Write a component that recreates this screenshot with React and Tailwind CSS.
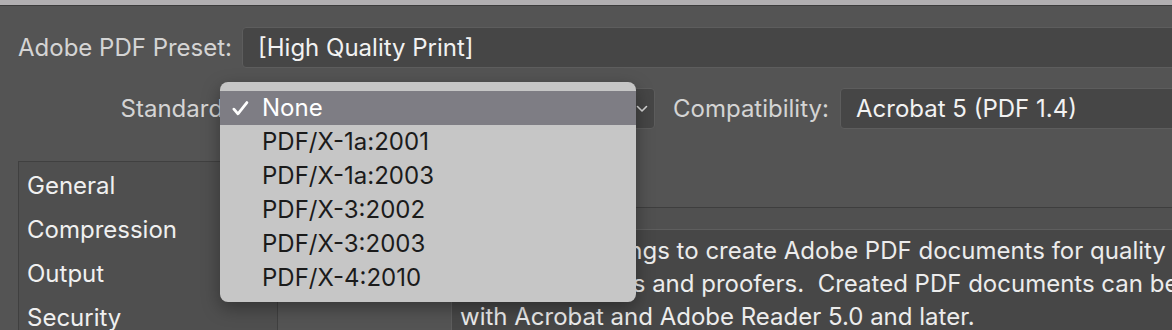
import React from "react";

const options = [
  "None",
  "PDF/X-1a:2001",
  "PDF/X-1a:2003",
  "PDF/X-3:2002",
  "PDF/X-3:2003",
  "PDF/X-4:2010",
];

const sections = ["General", "Compression", "Output", "Security"];

// Dark field used for the preset / standard / compatibility selects
const Field = ({ className = "", children }) => (
  <div
    className={`h-[41px] flex items-center rounded-[4px] border border-[#5d5d5d] bg-[#464646] text-[#f2f2f2] ${className}`}
  >
    {children}
  </div>
);

const StandardMenu = () => (
  <div className="absolute left-[220px] top-[82px] w-[416px] h-[220px] rounded-[8px] bg-[#c6c6c6] pt-[9px] shadow-[0_6px_18px_rgba(0,0,0,0.35)] overflow-hidden">
    {options.map((opt, i) => (
      <div
        key={opt}
        className={`h-[34px] flex items-center ${
          i === 0 ? "bg-[#7e7d84] text-white" : "text-[#1b1b1b]"
        }`}
      >
        <span className="w-[42px] pl-[12px] flex items-center">
          {i === 0 && (
            <svg width="17" height="17" viewBox="0 0 16 16" fill="none">
              <path d="M1.8 8.6L5.6 13L14 2.4" stroke="#fff" strokeWidth="2.6" strokeLinecap="round" strokeLinejoin="round" />
            </svg>
          )}
        </span>
        <span>{opt}</span>
      </div>
    ))}
  </div>
);

export default function App() {
  return (
    <div
      className="relative w-[1172px] h-[330px] overflow-hidden bg-[#545454] text-[24px] leading-none"
      style={{ fontFamily: "Inter, 'Noto Sans', sans-serif" }}
    >
      <div className="h-[5px] bg-[#b1afb1]" />
      <div className="h-px bg-[#3c3c3c]" />

      {/* preset row */}
      <div className="flex items-center pl-[18px] pt-[21px]">
        <span className="w-[224px] shrink-0 text-[#d4d4d4]">Adobe PDF Preset:</span>
        <Field className="flex-1 -mr-[10px] pl-[15px]">[High Quality Print]</Field>
      </div>

      {/* standard / compatibility row */}
      <div className="flex items-center mt-[20px]">
        <span className="w-[232px] shrink-0 pr-[2px] text-right text-[#d4d4d4] whitespace-nowrap">Standard:</span>
        <Field className="ml-[10px] w-[413px] shrink-0 justify-end pr-[6px]">
          <svg width="12" height="8" viewBox="0 0 12 8" fill="none">
            <path d="M1.5 1.5L6 6L10.5 1.5" stroke="#d8d8d8" strokeWidth="1.6" strokeLinecap="round" strokeLinejoin="round" />
          </svg>
        </Field>
        <span className="ml-[18px] w-[167px] shrink-0 text-[#d4d4d4] whitespace-nowrap">Compatibility:</span>
        <Field className="flex-1 -mr-[10px] pl-[15px]">Acrobat 5 (PDF 1.4)</Field>
      </div>

      {/* body */}
      <div className="flex mt-[32px] h-[200px]">
        <div className="ml-[18px] w-[260px] shrink-0 border border-[#404040] bg-[#4f4f4f] pt-[12px] pl-[8px] text-[#f0f0f0] flex flex-col gap-[20px]">
          {sections.map((s) => (
            <span key={s} className="h-[24px]">{s}</span>
          ))}
        </div>
        <div className="flex-1 min-w-0 flex flex-col">
          <div className="h-[46px]" />
          <div className="h-px bg-[#3e3e3e]" />
          <div className="h-[21px] bg-[#505050]" />
          <div className="ml-[173px] flex-1 border-t border-l border-[#5e5e5e] bg-[#474747] pl-[8px] pt-[4px] text-[#ececec] leading-[33px] whitespace-nowrap overflow-hidden">
            <div>Use these settings to create Adobe PDF documents for quality</div>
            <div>desktop printers and proofers.&nbsp; Created PDF documents can be</div>
            <div>with Acrobat and Adobe Reader 5.0 and later.</div>
          </div>
        </div>
      </div>

      <StandardMenu />
    </div>
  );
}
